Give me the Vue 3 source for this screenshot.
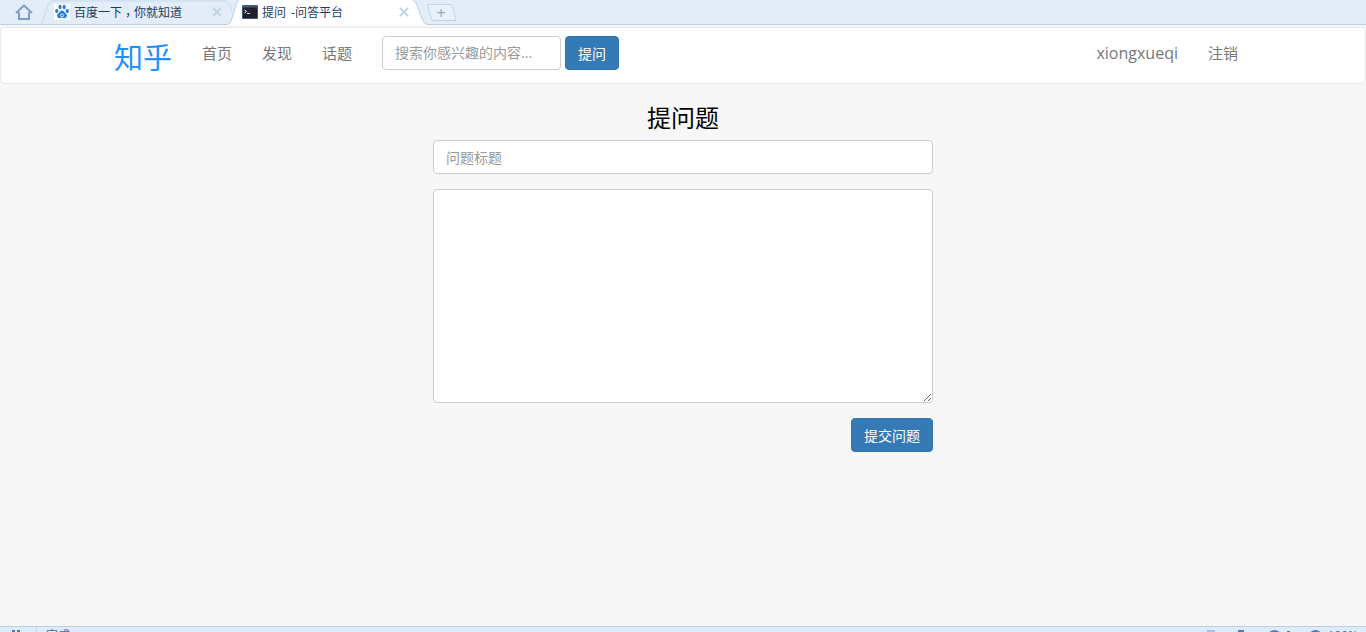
<script setup>
const navLinks = ['首页', '发现', '话题']
</script>

<template>
  <div class="page">
    <div class="tabbar">
      <!-- slanted tab outlines sit behind the tab contents -->
      <svg class="tab-shapes" width="460" height="25" viewBox="0 0 460 25">
        <path d="M41.500 24 48.500 4Q49.500 1 53 1H224Q228 1 229.500 4L232 11" fill="none" stroke="#c6d7ea" />
        <path d="M227 25Q230.500 24 231.500 20L236 5Q237.500 0 242 0H410Q415 0 416.500 4L422.500 20Q424 24 428 25Z" fill="#fff" />
        <path d="M227 24.500Q230.500 24 231.500 20L236 5Q237 1.500 239 .5M413 .5Q415.500 1.500 416.500 4L422.500 20Q424 24 428 24.500" fill="none" stroke="#b9d0ea" />
        <path d="M429 4.500H450Q452 4.500 452.500 6.500L456 20.500H434Q432 20.500 431.500 18.500L427.500 6Q427 4.500 429 4.500Z" fill="#e8f0fa" stroke="#c2d3e7" />
      </svg>
      <div class="home">
        <svg width="18" height="16" viewBox="0 0 18 16">
          <path d="M1 9 9 1.500l8 7.500M4 8v7h10V8" fill="none" stroke="#7e9dc4" stroke-width="2" />
        </svg>
      </div>
      <div class="tab tab-off">
        <svg class="favicon" width="16" height="16" viewBox="0 0 16 16">
          <rect width="16" height="16" fill="#fff" />
          <g fill="#2a7de1">
            <ellipse cx="2.800" cy="7" rx="1.700" ry="2.100" />
            <ellipse cx="6" cy="3" rx="1.600" ry="2.200" />
            <ellipse cx="10.200" cy="3" rx="1.600" ry="2.200" />
            <ellipse cx="13.300" cy="7" rx="1.700" ry="2.100" />
            <path d="M8 6.600c2 0 2.500 2 4 3.100 1.700 1.300.9 4.700-1.900 4.500-.9 0-1.400-.4-2.100-.4s-1.200.4-2.100.4C3.100 14.400 2.300 11 4 9.700c1.500-1.100 2-3.100 4-3.100z" />
          </g>
          <circle cx="8" cy="11.500" r="1.500" fill="none" stroke="#fff" stroke-width=".8" />
        </svg>
        <span class="tab-title">百度一下<span class="comma">，</span>你就知道</span>
        <svg class="tab-close" width="10" height="10" viewBox="0 0 10 10">
          <path d="M1 1l8 8M9 1l-8 8" stroke="#c3d3e6" stroke-width="2" />
        </svg>
      </div>
      <div class="tab tab-on">
        <svg class="favicon" width="16" height="14" viewBox="0 0 16 14">
          <rect width="16" height="14" rx="1" fill="#46587a" />
          <rect x="1" y="2.500" width="14" height="10.500" fill="#1f2228" />
          <path d="M2.500 5l2 1.500-2 1.500" fill="none" stroke="#fff" stroke-width="1" />
          <path d="M5 8.500h3" stroke="#cfd4dc" stroke-width="1" />
        </svg>
        <span class="tab-title">提问 -问答平台</span>
        <svg class="tab-close" width="10" height="10" viewBox="0 0 10 10">
          <path d="M1 1l8 8M9 1l-8 8" stroke="#c3d3e6" stroke-width="2" />
        </svg>
      </div>
      <div class="tab-new">+</div>
    </div>

    <nav class="navbar">
      <a class="brand">知乎</a>
      <a v-for="link in navLinks" :key="link" class="nav-link">{{ link }}</a>
      <form class="search" @submit.prevent>
        <input class="field search-input" type="text" placeholder="搜索你感兴趣的内容..." />
        <button class="btn" type="button">提问</button>
      </form>
      <div class="nav-right">
        <a class="nav-link username">xiongxueqi</a>
        <a class="nav-link">注销</a>
      </div>
    </nav>

    <main class="content">
      <h3 class="title">提问题</h3>
      <input class="field title-input" type="text" placeholder="问题标题" />
      <textarea class="field body-input"></textarea>
      <div class="actions">
        <button class="btn" type="button">提交问题</button>
      </div>
    </main>

    <div class="statusbar">
      <div class="status-left">
        <svg class="status-icon" width="8" height="3" viewBox="0 0 8 3">
          <path d="M0 0h3v3H0zM5 0h3v3H5z" fill="#5a7aa3" />
        </svg>
        <span class="status-divider"></span>
        <span class="status-text">完成</span>
      </div>
      <div class="status-right">
        <span class="status-mark arrow"></span>
        <span class="status-mark box"></span>
        <span class="status-mark ring"></span>
        <span class="status-mark tick"></span>
        <span class="status-mark ring"></span>
        <span class="status-text">100%</span>
      </div>
    </div>
  </div>
</template>

<style>
html,
body {
  margin: 0;
  background: #f7f7f7;
}
</style>

<style scoped>
.page {
  height: 632px;
  display: flex;
  flex-direction: column;
  overflow: hidden;
  background: #f7f7f7;
  font-family: "Open Sans", "Noto Sans CJK SC", sans-serif;
  font-size: 14px;
  color: #333;
}

.tabbar {
  position: relative;
  height: 25px;
  flex: none;
  box-sizing: border-box;
  display: flex;
  align-items: flex-end;
  background: #e3edf8;
  border-bottom: 1px solid #b9d0ea;
}

.tab-shapes {
  position: absolute;
  top: 0;
  left: 0;
}

.home {
  position: relative;
  width: 43px;
  height: 24px;
  flex: none;
  box-sizing: border-box;
  padding: 4px 0 0 15px;
}

.tab {
  position: relative;
  width: 190px;
  height: 24px;
  box-sizing: border-box;
  display: flex;
  align-items: center;
  font-size: 12px;
  color: #1c3b5e;
}

.tab-off {
  padding: 0 11px;
}

.tab-on {
  padding: 0 14px 0 9px;
}

.favicon {
  flex: none;
  margin-right: 4px;
}

.tab-title {
  flex: 1;
  white-space: nowrap;
  word-spacing: 2px;
}

/* the comma sits in the middle of its cell, low on the line */
.comma {
  position: relative;
  top: 3px;
  font-family: "Noto Sans CJK TC", sans-serif;
}

.tab-close {
  flex: none;
}

.tab-new {
  position: relative;
  width: 28px;
  height: 20px;
  margin-left: 4px;
  color: #8ea6c4;
  font-size: 16px;
  line-height: 18px;
  text-align: center;
}

.navbar {
  height: 57px;
  flex: none;
  box-sizing: border-box;
  margin-top: 2px;
  padding: 0 112px 6px 113px;
  display: flex;
  align-items: center;
  background: #fff;
  border: 1px solid #e7e7e7;
  border-radius: 4px;
}

.brand {
  margin: 6px 15px 0 0;
  color: #1e90ff;
  font-size: 29px;
}

.nav-link {
  padding: 0 15px;
  color: #777;
  font-size: 15px;
}

.username {
  font-size: 16px;
}

.search {
  display: flex;
  gap: 4px;
  margin-left: 15px;
}

.nav-right {
  display: flex;
  align-items: center;
  margin-left: auto;
}

.field {
  display: block;
  box-sizing: border-box;
  padding: 6px 12px;
  background: #fff;
  border: 1px solid #ccc;
  border-radius: 4px;
  font-family: inherit;
  font-size: 14px;
  color: #555;
  outline: none;
}

.field::placeholder {
  color: #999;
}

.search-input {
  width: 179px;
  height: 34px;
}

.btn {
  height: 34px;
  padding: 0 12px;
  background: #337ab7;
  border: 1px solid #3075b0;
  border-radius: 4px;
  color: #fff;
  font-family: inherit;
  font-size: 14px;
}

.content {
  flex: 1;
  width: 500px;
  margin: 0 auto;
  display: flex;
  flex-direction: column;
}

.title {
  margin: 21px 0 9px;
  color: #000;
  font-size: 24px;
  font-weight: 400;
  line-height: 26px;
  text-align: center;
}

.title-input {
  width: 100%;
  height: 34px;
  margin-bottom: 15px;
}

.body-input {
  width: 100%;
  height: 214px;
  margin-bottom: 15px;
}

.actions {
  display: flex;
  justify-content: flex-end;
}

.statusbar {
  height: 6px;
  flex: none;
  box-sizing: border-box;
  display: flex;
  justify-content: space-between;
  overflow: hidden;
  background: #deebfa;
  border-top: 1px solid #b9d0ea;
  font-size: 12px;
  color: #4d6d96;
}

.status-left {
  display: flex;
  padding-left: 12px;
}

.status-icon {
  margin: 3px 16px 0 0;
}

.status-divider {
  width: 1px;
  height: 6px;
  margin-right: 9px;
  background: #c6d7ea;
}

.status-text {
  margin-top: 2px;
  line-height: 14px;
}

.status-right {
  display: flex;
  align-items: flex-start;
  padding-right: 8px;
}

.status-mark {
  box-sizing: border-box;
  height: 12px;
  margin-top: 3px;
}

.status-mark.arrow {
  width: 8px;
  margin-right: 23px;
  background: #a9bfdb;
}

.status-mark.box {
  width: 6px;
  margin-right: 24px;
  background: #5a7aa3;
}

.status-mark.ring {
  width: 13px;
  border: 2px solid #5a7aa3;
  border-radius: 50%;
}

.status-mark.tick {
  width: 3px;
  margin: 4px 19px 0 6px;
  background: #5a7aa3;
}

.status-right .status-text {
  margin-left: 5px;
}
</style>
